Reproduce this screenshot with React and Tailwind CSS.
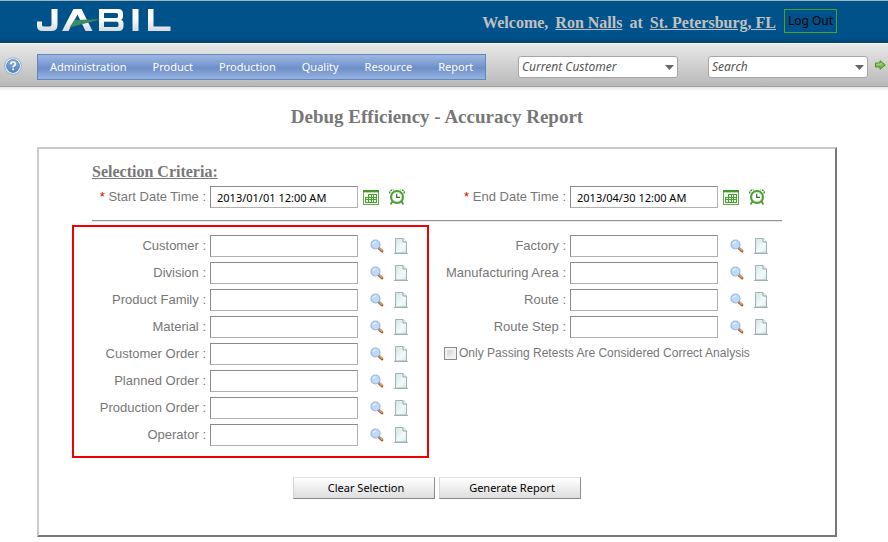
import React from "react";

const menu = ["Administration", "Product", "Production", "Quality", "Resource", "Report"];
const leftFields = [
  "Customer",
  "Division",
  "Product Family",
  "Material",
  "Customer Order",
  "Planned Order",
  "Production Order",
  "Operator",
];
const rightFields = ["Factory", "Manufacturing Area", "Route", "Route Step"];

function Logo() {
  return (
    <svg width="134" height="24" viewBox="0 0 134 24" role="img" aria-label="Jabil">
      <defs>
        <linearGradient id="logoFill" x1="0" y1="0" x2="0" y2="24" gradientUnits="userSpaceOnUse">
          <stop offset="0.4" stopColor="#ffffff" />
          <stop offset="1" stopColor="#d4d7da" />
        </linearGradient>
      </defs>
      <g fill="url(#logoFill)" fillRule="evenodd">
        <path d="M14.500 1H20.500V17Q20.500 23 14.500 23H5.500Q0 23 0 18V13.500H5V17Q5 18.500 7 18.500H12.500Q14.500 18.500 14.500 16.500Z" />
        <path d="M25 23L36.500 1H44.500L55.500 23H48.500L40.500 6.500L31.500 23Z" />
        <path d="M62 1H81Q86 1 86 6V8.500Q86 11 84 11.700Q86.500 12.500 86.500 15V18Q86.500 23 81.500 23H62ZM67 5V10H79Q81 10 81 8.500V6.500Q81 5 79 5ZM67 13.700V19H79.500Q81.500 19 81.500 17.500V15.500Q81.500 13.700 79.500 13.700Z" />
        <path d="M95.500 1H101.500V23H95.500Z" />
        <path d="M111 1H116.500V18.500H133.500V23H111Z" />
      </g>
      <path d="M32.500 19.500L37.500 12L64 11.200Z" fill="#3b8a63" />
    </svg>
  );
}

function HelpIcon() {
  return (
    <svg width="18" height="18" viewBox="0 0 18 18" aria-hidden="true">
      <defs>
        <linearGradient id="helpFill" x1="0" y1="0" x2="0" y2="1">
          <stop offset="0" stopColor="#8fb2dc" />
          <stop offset="1" stopColor="#4f83c0" />
        </linearGradient>
      </defs>
      <circle cx="9" cy="9" r="8.300" fill="#f2f7fc" stroke="#8eaed2" strokeWidth="1" />
      <circle cx="9" cy="9" r="6.400" fill="url(#helpFill)" stroke="#4678b2" strokeWidth="0.800" />
      <path d="M6.800 7.200Q6.900 5 9.100 5Q11.300 5 11.300 6.900Q11.300 8 10 8.700Q9.100 9.200 9.100 10.300" fill="none" stroke="#fff" strokeWidth="1.700" />
      <rect x="8.200" y="11.500" width="1.800" height="1.700" fill="#fff" />
    </svg>
  );
}

function CalendarIcon() {
  return (
    <svg width="16" height="16" viewBox="0 0 16 16" aria-hidden="true">
      <rect x="0.500" y="1.500" width="15" height="14" fill="#f3faee" stroke="#68aa52" />
      <rect x="0" y="1" width="16" height="2" fill="#459632" />
      <path d="M1 3.500H15" stroke="#b5dca5" />
      <path d="M5 5H14V14H2V8H5Z" fill="#4c9c38" />
      <path d="M6 6h2v2H6zM9 6h1v2H9zM11 6h2v2h-2zM3 9h2v1H3zM6 9h2v1H6zM9 9h1v1H9zM11 9h2v1h-2zM3 11h2v2H3zM6 11h2v2H6zM9 11h1v2H9zM11 11h2v2h-2z" fill="#e6f5dd" />
    </svg>
  );
}

function ClockIcon() {
  return (
    <svg width="16" height="16" viewBox="0 0 16 16" aria-hidden="true">
      <path d="M0.700 4.500Q0.300 1.500 4.500 0.700M15.300 4.500Q15.700 1.500 11.500 0.700" fill="none" stroke="#469b31" strokeWidth="1.500" strokeDasharray="2 0.700" />
      <path d="M3.500 12.500L1.500 15.500M12.500 12.500L14.500 15.500" stroke="#4b9c38" strokeWidth="1.700" />
      <circle cx="8" cy="8" r="6" fill="#fff" stroke="#4a9e35" strokeWidth="2" />
      <circle cx="8" cy="8" r="4.700" fill="none" stroke="#aed69f" strokeWidth="0.600" />
      <path d="M7.700 4.800V8.300H11" fill="none" stroke="#26731a" strokeWidth="1.200" />
    </svg>
  );
}

function SearchIcon() {
  return (
    <svg width="14" height="14" viewBox="0 0 14 14" aria-hidden="true">
      <path d="M9 9.300L12 12" stroke="#9b6432" strokeWidth="2.800" strokeLinecap="round" />
      <path d="M9.800 9.500L12 11.400" stroke="#dfa76a" strokeWidth="1.300" strokeLinecap="round" />
      <circle cx="5.500" cy="5.500" r="4.500" fill="#bedaf7" stroke="#9bb8e1" strokeWidth="1.200" />
      <path d="M3 5Q3.500 2.800 6 3" fill="none" stroke="#e7f3ff" strokeWidth="1.200" />
    </svg>
  );
}

function PageIcon() {
  return (
    <svg width="14" height="16" viewBox="0 0 14 16" aria-hidden="true">
      <defs>
        <linearGradient id="pageFill" x1="0" y1="0" x2="1" y2="1">
          <stop offset="0" stopColor="#d2e5e5" />
          <stop offset="0.600" stopColor="#f2fafa" />
          <stop offset="1" stopColor="#d7eaea" />
        </linearGradient>
      </defs>
      <path d="M1.500 0.500H9L12.500 4V15H1.500Z" fill="url(#pageFill)" stroke="#a3b2b2" />
      <path d="M9 0.500V4H12.500" fill="#f5fafa" stroke="#8b9b9b" strokeWidth="0.900" />
      <path d="M0 15.500H14" stroke="#a3b0b0" />
    </svg>
  );
}

function GoIcon() {
  return (
    <svg width="11" height="10" viewBox="0 0 11 10" aria-hidden="true">
      <path d="M0.500 3H5V0.700L10.300 5L5 9.300V7H0.500Z" fill="#7cc04c" stroke="#468f26" />
      <path d="M1.500 4.200H6V3" fill="none" stroke="#c3e7a3" strokeWidth="0.800" />
    </svg>
  );
}

function Combo({ label }) {
  return (
    <div className="relative h-[22px] w-40">
      <select
        aria-label={label}
        className="block h-full w-full appearance-none rounded-[3px] border border-[#a5a5a5] bg-white px-[3px] text-xs text-[#555] italic"
      >
        <option>{label}</option>
      </select>
      <svg width="9" height="5" viewBox="0 0 9 5" className="pointer-events-none absolute top-[9px] right-1" aria-hidden="true">
        <path d="M0 0H9L4.500 5Z" fill="#666" />
      </svg>
    </div>
  );
}

const inputClass =
  "ml-1 h-[22px] w-[148px] shrink-0 border border-t-[#8a8a8a] border-r-[#b0b0b0] border-b-[#b0b0b0] border-l-[#8a8a8a] bg-white px-[6px] font-['Noto_Sans',sans-serif] text-[11px] text-black";

function LookupField({ label, id, labelClass }) {
  return (
    <div className="flex h-[22px] items-center">
      <label htmlFor={id} className={`${labelClass} shrink-0 text-right`}>
        {label} :
      </label>
      <input id={id} type="text" className={inputClass} />
      <button type="button" aria-label={`Find ${label}`} className="ml-3">
        <SearchIcon />
      </button>
      <button type="button" aria-label={`List ${label}`} className="ml-[10px]">
        <PageIcon />
      </button>
    </div>
  );
}

function DateField({ label, id, value, labelClass }) {
  return (
    <div className="flex h-[22px] items-center">
      <label htmlFor={id} className={`${labelClass} shrink-0 text-right`}>
        <span className="text-[#e00000]">*</span> {label} :
      </label>
      <input id={id} type="text" defaultValue={value} className={inputClass} />
      <button type="button" aria-label={`${label} calendar`} className="ml-[5px]">
        <CalendarIcon />
      </button>
      <button type="button" aria-label={`${label} clock`} className="ml-[10px]">
        <ClockIcon />
      </button>
    </div>
  );
}

const actionClass =
  "h-[22px] w-[142px] border border-t-[#e3e3e3] border-r-[#8d8d8d] border-b-[#858585] border-l-[#d5d5d5] bg-linear-to-b from-white to-[#dedede] pl-1 text-[11px] text-black";

export default function App() {
  return (
    <div className="min-h-screen bg-white font-['Noto_Sans',sans-serif] text-[#777]">
      <header className="flex h-[43px] justify-between border-t border-[#a5b0b8] bg-linear-to-b from-[#00528a] from-85% to-[#004474] pr-[51px] pl-[37px]">
        <div className="pt-[7px]">
          <Logo />
        </div>
        <div className="flex items-start pt-2">
          <p className="mr-2 flex gap-[7px] font-['Liberation_Serif',serif] text-base leading-7 font-bold text-[#c0c0c0]">
            <span>Welcome,</span>
            <a href="#user" className="underline">Ron Nalls</a>
            <span>at</span>
            <a href="#site" className="underline">St. Petersburg, FL</a>
          </p>
          <button type="button" className="h-6 w-[53px] border border-[#50a030] text-xs text-black">
            Log Out
          </button>
        </div>
      </header>

      <div className="flex h-11 items-start border-t border-b border-t-white border-b-[#a0a0a0] bg-linear-to-b from-[#e8e8e8] to-[#b9b9b9] pl-1">
        <button type="button" aria-label="Help" className="pt-[13px]">
          <HelpIcon />
        </button>
        <nav className="mt-[10px] ml-[15px] flex h-[26px] items-center gap-[26px] border border-[#6385c0] bg-linear-to-b from-[#9db8e2] via-[#6f8fc9] via-55% to-[#96b4e0] px-3 text-[11px] text-white">
          {menu.map((item) => (
            <a key={item} href={`#${item}`}>
              {item}
            </a>
          ))}
        </nav>
        <div className="ml-auto flex items-start pt-3">
          <Combo label="Current Customer" />
          <div className="ml-[30px]">
            <Combo label="Search" />
          </div>
          <button type="button" aria-label="Go" className="mr-[2px] ml-[7px] pt-1">
            <GoIcon />
          </button>
        </div>
      </div>
      <div className="h-1 bg-linear-to-b from-[#e6e6e6] to-white" />

      <main className="mr-[51px] ml-[37px] font-['Liberation_Sans',sans-serif] text-[13px]">
        <h1 className="pt-[14px] text-center font-['Liberation_Serif',serif] text-[19px] leading-6 font-bold">
          Debug Efficiency - Accuracy Report
        </h1>
        <form
          className="mt-[18px] border-2 border-t-[#cbcbcb] border-r-[#777] border-b-[#777] border-l-[#cbcbcb] px-[33px] pt-[11px] pb-9"
          onSubmit={(e) => e.preventDefault()}
        >
          <h2 className="ml-5 font-['Liberation_Serif',serif] text-base leading-6 font-bold underline">
            Selection Criteria:
          </h2>
          <div className="mt-[2px] flex">
            <div className="w-[357px] pl-[2px]">
              <DateField id="start" label="Start Date Time" value="2013/01/01 12:00 AM" labelClass="w-[132px]" />
            </div>
            <DateField id="end" label="End Date Time" value="2013/04/30 12:00 AM" labelClass="w-[137px]" />
          </div>
          <hr className="mt-3 mr-5 ml-5 h-[2px] border-t border-b border-t-[#949494] border-b-[#e8e8e8]" />
          <div className="mt-[3px] flex items-start">
            <fieldset className="flex w-[357px] flex-col gap-[5px] border-2 border-[#f00000] pt-2 pb-[10px]">
              {leftFields.map((label) => (
                <LookupField key={label} id={label} label={label} labelClass="w-[132px]" />
              ))}
            </fieldset>
            <div className="flex flex-col gap-[5px] pt-[10px]">
              {rightFields.map((label) => (
                <LookupField key={label} id={label} label={label} labelClass="w-[137px]" />
              ))}
              <label className="ml-[15px] flex items-center gap-[2px] text-xs leading-5">
                <input
                  type="checkbox"
                  className="h-[13px] w-[13px] appearance-none border border-[#8a8a8a] bg-linear-to-br from-[#c8c8c8] to-white shadow-[inset_0_0_0_2px_#f2f2f2]"
                />
                Only Passing Retests Are Considered Correct Analysis
              </label>
            </div>
          </div>
          <div className="mt-[19px] flex justify-center gap-1 font-['Noto_Sans',sans-serif]">
            <button type="button" className={actionClass}>
              Clear Selection
            </button>
            <button type="submit" className={actionClass}>
              Generate Report
            </button>
          </div>
        </form>
      </main>
    </div>
  );
}
